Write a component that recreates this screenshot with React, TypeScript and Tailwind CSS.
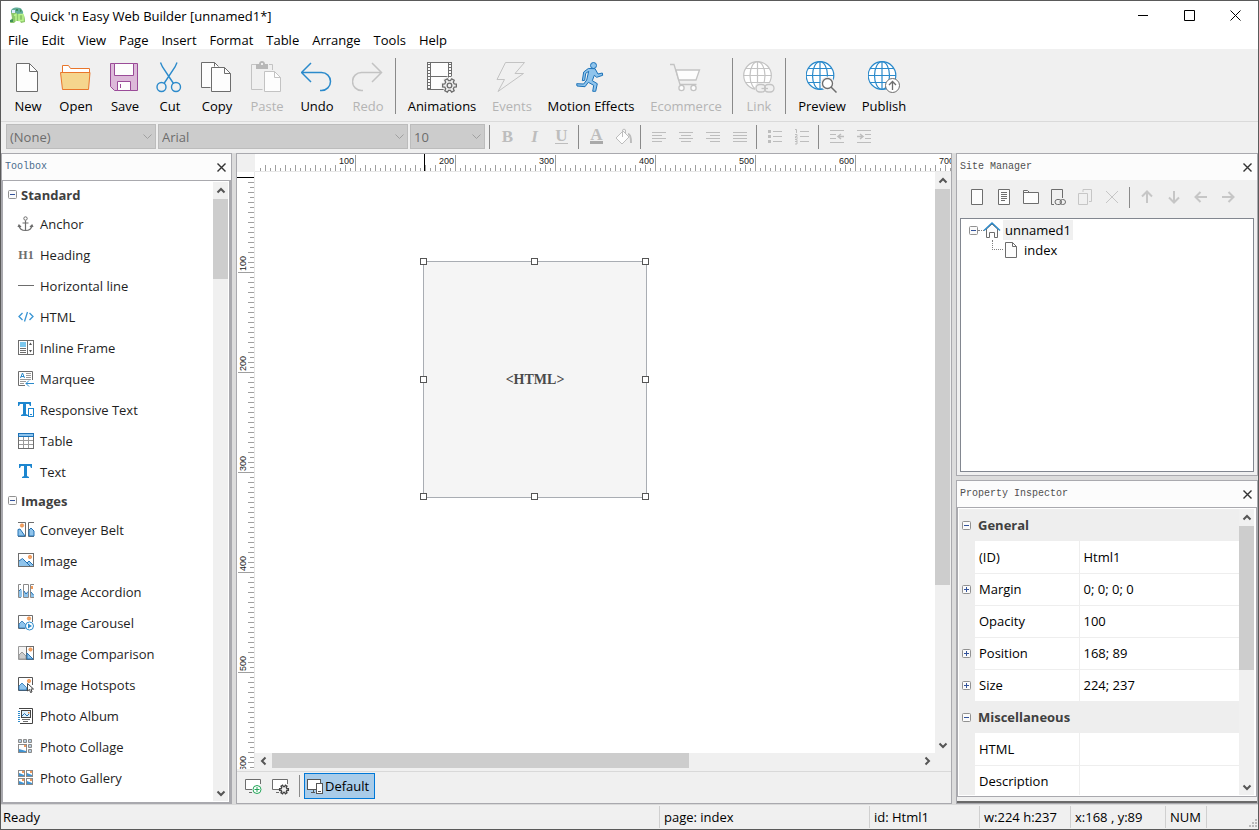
import { useLayoutEffect, useRef, useState } from "react";
import type { ReactNode } from "react";
import clsx from "clsx";

const GRAY = "#6d6d6d";
const DIM = "#c3c3c3";
const BLUE = "#2b8acb";

/* ---------- large toolbar icons (32x32) ---------- */

function Icon32({ color = GRAY, children }: { color?: string; children: ReactNode }) {
  return (
    <svg width="32" height="32" viewBox="0 0 32 32" fill="none" stroke={color} aria-hidden="true">
      {children}
    </svg>
  );
}

function gearPoints(cx: number, cy: number, outer: number, inner: number, teeth = 6) {
  const points: string[] = [];
  for (let i = 0; i < teeth; i++) {
    const base = (i * 2 * Math.PI) / teeth;
    const step = Math.PI / teeth;
    const ring: [number, number][] = [
      [-0.4, outer],
      [0.4, outer],
      [0.65, inner],
      [1.35, inner],
    ];
    ring.forEach(([offset, radius]) => {
      const angle = base + offset * step;
      points.push(`${cx + radius * Math.cos(angle)},${cy + radius * Math.sin(angle)}`);
    });
  }
  return points.join(" ");
}

function GlobeLines({ cx }: { cx: number }) {
  return (
    <g fill="none" strokeWidth="1.2">
      <circle cx={cx} cy="14.5" r="13.8" fill="#fff" />
      <ellipse cx={cx} cy="14.5" rx="7.5" ry="13.8" />
      <path d={`M${cx} .5v28M${cx - 14} 14.5h28M${cx - 12} 7.5h24M${cx - 12} 21.5h24`} />
    </g>
  );
}

const bigIcons: Record<string, ReactNode> = {
  New: (
    <Icon32>
      <path fill="#fdfdfd" d="M4.5 2.5H17.5L25.5 10.5V30.5H4.5Z" />
      <path d="M17.5 2.5V10.5H25.5" />
    </Icon32>
  ),
  Open: (
    <Icon32 color="#e9762b">
      <path fill="#fff" d="M2.5 14V4.5H8.5L10.5 7.5H29.5V14Z" />
      <path fill="#f5d58d" d="M.5 11.5H30L28.5 28.5H2.5Z" />
    </Icon32>
  ),
  Save: (
    <Icon32 color="#9a4b98">
      <path fill="#dcb9d9" d="M1.5 2.5H28.5V29.5H5.5L1.5 25.5Z" />
      <path fill="#fdfdfd" d="M5.5 2.5H24.5V14.5H5.5ZM8.5 20.5H21.5V29.5H8.5Z" />
      <path d="M11.5 23V27" />
    </Icon32>
  ),
  Cut: (
    <Icon32 color={BLUE}>
      <path strokeWidth="1.4" d="M6.5 1.5L8.5 6L19.5 22.5M23 1.5L21 6L10 22.5" />
      <circle strokeWidth="1.4" cx="7.5" cy="26" r="4.5" />
      <circle strokeWidth="1.4" cx="22" cy="26" r="4.5" />
    </Icon32>
  ),
  Copy: (
    <Icon32>
      <path fill="#fdfdfd" d="M10.5 26.5H.5V1.5H13.5L17.5 5.5V26.5" stroke="none" />
      <path d="M9.5 26.5H.5V1.5H13.5L17.5 5.5M13.5 1.5V5.5" />
      <path fill="#fdfdfd" d="M10.5 6.5H23.5L29.5 12.5V30.5H10.5Z" />
      <path d="M23.5 6.5V12.5H29.5" />
    </Icon32>
  ),
  Paste: (
    <Icon32 color={DIM}>
      <path d="M5 3.5H.5V28.5H11.5M18 3.5H21.5V9" />
      <path fill="#b8b8b8" stroke="none" d="M5 3H8C8 1 9.5 0 11 0S14 1 14 3H17V8H5Z" />
      <circle cx="11" cy="3" r="1" fill="#fff" stroke="none" />
      <path fill="#fdfdfd" d="M13.5 10.5H23.5L29.5 16.5V30.5H13.5Z" />
      <path d="M23.5 10.5V16.5H29.5" />
    </Icon32>
  ),
  Undo: (
    <Icon32 color={BLUE}>
      <path strokeWidth="1.5" d="M10 2L.5 11.5L10 21M.5 11.5H20.5A9 9 0 0 1 20.5 29.5H19" />
    </Icon32>
  ),
  Redo: (
    <Icon32 color={DIM}>
      <path strokeWidth="1.5" d="M20 2L29.5 11.5L20 21M29.5 11.5H9.5A9 9 0 0 0 9.5 29.5H11" />
    </Icon32>
  ),
  Animations: (
    <Icon32>
      <rect x="1.5" y="1.5" width="24" height="27" fill="#fdfdfd" />
      <path d="M4.5 1.5V28.5M22.5 1.5V28.5M4.5 15.5H22.5" />
      <path strokeDasharray="1 2" strokeWidth="2" d="M3 3V28M24 3V28" />
      <polygon points={gearPoints(23.5, 24.5, 7.5, 5)} fill="#f0f0f0" stroke="#f0f0f0" strokeWidth="3" />
      <polygon points={gearPoints(23.5, 24.5, 7, 5)} fill="#f0f0f0" strokeWidth="1.3" />
      <circle cx="23.5" cy="24.5" r="2.3" strokeWidth="1.3" />
    </Icon32>
  ),
  Events: (
    <Icon32 color={DIM}>
      <path d="M9.5 1.5H28.5L19 12.5H27.5L2 30.5L8.5 18.5H1Z" />
    </Icon32>
  ),
  "Motion Effects": (
    <Icon32 color="#1c72b8">
      <circle cx="18.5" cy="4.5" r="3" fill="#8fc4ec" />
      <path
        fill="#8fc4ec"
        strokeLinejoin="round"
        d="M7.3 19.7L8.7 11L13.3 7.5L20 7.7L23 13L27.3 12L27.7 14.3L21.7 16.3L19.3 14.3L17.3 19.7L22.3 22.7L20.7 30.3H17.7L18.7 24.3L13.3 21.3L10 25.7L2 25L1.7 22.7L8.7 23L11.7 19L13.7 10.3L10.7 12.3L9.7 19.3Z"
      />
    </Icon32>
  ),
  Ecommerce: (
    <Icon32 color={DIM}>
      <path strokeWidth="1.3" d="M0 3.5H4L10 23.5H26.5" />
      <path fill="#fdfdfd" strokeWidth="1.3" d="M6 9H29.5L26 19H8.7Z" />
      <circle cx="11.5" cy="27" r="2.6" strokeWidth="1.3" fill="#fdfdfd" />
      <circle cx="23.5" cy="27" r="2.6" strokeWidth="1.3" fill="#fdfdfd" />
    </Icon32>
  ),
  Link: (
    <Icon32 color={DIM}>
      <GlobeLines cx={14.5} />
      <rect x="12" y="22" width="21" height="11" rx="4" fill="#f0f0f0" stroke="none" />
      <rect x="13" y="23.5" width="9.5" height="7.5" rx="3.7" strokeWidth="1.3" />
      <rect x="21.5" y="23.5" width="9.5" height="7.5" rx="3.7" strokeWidth="1.3" />
      <path strokeWidth="1.3" d="M18.5 27.5H25" />
    </Icon32>
  ),
  Preview: (
    <Icon32 color={BLUE}>
      <GlobeLines cx={14} />
      <circle cx="21.5" cy="22.5" r="7" fill="#f0f0f0" stroke="none" />
      <circle cx="21.5" cy="22.5" r="5" fill="#fff" stroke={GRAY} strokeWidth="1.3" />
      <path stroke={GRAY} strokeWidth="1.5" d="M25 26L30.5 31.5" />
    </Icon32>
  ),
  Publish: (
    <Icon32 color={BLUE}>
      <GlobeLines cx={14} />
      <circle cx="24.5" cy="24.5" r="7" fill="#fff" stroke={GRAY} />
      <path stroke={GRAY} strokeWidth="1.3" d="M24.5 29V20.5M21 24L24.5 20.5L28 24" />
    </Icon32>
  ),
};

type Tool = { label: string; width: string; disabled?: boolean };

const tools: (Tool | null)[] = [
  { label: "New", width: "w-12" },
  { label: "Open", width: "w-12" },
  { label: "Save", width: "w-[50px]" },
  { label: "Cut", width: "w-10" },
  { label: "Copy", width: "w-[54px]" },
  { label: "Paste", width: "w-[46px]", disabled: true },
  { label: "Undo", width: "w-[54px]" },
  { label: "Redo", width: "w-12", disabled: true },
  null,
  { label: "Animations", width: "w-[86px]" },
  { label: "Events", width: "w-[54px]", disabled: true },
  { label: "Motion Effects", width: "w-[104px]" },
  { label: "Ecommerce", width: "w-[86px]", disabled: true },
  null,
  { label: "Link", width: "w-[46px]", disabled: true },
  null,
  { label: "Preview", width: "w-[66px]" },
  { label: "Publish", width: "w-[58px]" },
];

/* ---------- small icons (16x16) ---------- */

function Icon16({ color = GRAY, children }: { color?: string; children: ReactNode }) {
  return (
    <svg
      width="16"
      height="16"
      viewBox="0 0 16 16"
      fill="none"
      stroke={color}
      className="shrink-0 overflow-visible"
      aria-hidden="true"
    >
      {children}
    </svg>
  );
}

function Sun({ cx, cy }: { cx: number; cy: number }) {
  return <circle cx={cx} cy={cy} r="1.7" fill="#f3a462" stroke="#e5803a" strokeWidth=".6" />;
}

function MiniScene({ x, y, size = 6 }: { x: number; y: number; size?: number }) {
  const right = x + size - 1;
  const bottom = y + size - 1;
  return (
    <g>
      <rect x={x + 0.5} y={y + 0.5} width={size - 1} height={size - 1} fill="#fff" />
      <path stroke="none" fill="#3f93d2" d={`M${x + 1} ${bottom - 3}L${right} ${bottom - 1}V${bottom}H${x + 1}Z`} />
      <rect x={right - 2} y={y + 1} width="2" height="2" fill="#ef9a5c" stroke="none" />
    </g>
  );
}

type ToolboxItem = { label: string; icon: ReactNode };

const standardItems: ToolboxItem[] = [
  {
    label: "Anchor",
    icon: (
      <Icon16>
        <circle cx="7.5" cy="2.5" r="1.7" />
        <path
          strokeWidth="1.2"
          d="M7.5 4.5V14.5M4.5 7H10.5M1 9.5C1.5 13 4 14.5 7.5 14.5S13.5 13 14 9.5M0 11L1 9L3 11M12 11L14 9L15 11"
        />
      </Icon16>
    ),
  },
  {
    label: "Heading",
    icon: (
      <span className="flex w-4 shrink-0 justify-center font-['Liberation_Serif',serif] text-xs leading-4 font-bold text-[#6d6d6d]">
        H1
      </span>
    ),
  },
  { label: "Horizontal line", icon: <Icon16><path d="M0 7.5H16" /></Icon16> },
  {
    label: "HTML",
    icon: (
      <Icon16 color="#3a95d4">
        <path strokeWidth="1.3" d="M4.5 4L1 7.5L4.5 11M11.5 4L15 7.5L11.5 11M9.5 3L6.5 12.5" />
      </Icon16>
    ),
  },
  {
    label: "Inline Frame",
    icon: (
      <Icon16>
        <rect x=".5" y=".5" width="15" height="14" fill="#fff" />
        <rect x="2" y="2" width="6" height="5" fill="#7cc8ee" stroke="none" />
        <path d="M9.5 1V14M2 8.5H8M2 10.5H8M2 12.5H8" />
        <path fill="#555" stroke="none" d="M11 5L12.5 2.5L14 5ZM11 10H14L12.5 12.5Z" />
      </Icon16>
    ),
  },
  {
    label: "Marquee",
    icon: (
      <Icon16>
        <path fill="#fff" d="M14.5 9V.5H.5V14.5H7" />
        <path stroke="#9a9a9a" d="M8 2.5H13M8 4.5H13M8 6.5H13M2 8.5H13M2 10.5H8M2 12.5H6" />
        <path stroke="#2b8acb" d="M2.5 7L4.5 2L6.5 7M3 5.5H6M8 12.5H16M11 9.5L8 12.5L11 15.5" />
      </Icon16>
    ),
  },
  {
    label: "Responsive Text",
    icon: (
      <Icon16 color="#1d86cf">
        <path fill="#1d86cf" stroke="none" d="M0 0H13V4H12L11 2H8V12L10 13V14H3V13L5 12V2H2L1 4H0Z" />
        <rect x="10" y="6" width="6" height="9" fill="#fff" stroke="none" />
        <rect x="10.5" y="6.5" width="5" height="8" fill="#fff" />
        <path d="M12 12.5H14" />
      </Icon16>
    ),
  },
  {
    label: "Table",
    icon: (
      <Icon16>
        <path stroke="#9a9a9a" d="M5.5 3V15M10.5 3V15M1 7.5H15M1 11.5H15" />
        <rect x=".5" y=".5" width="15" height="15" />
        <rect x=".5" y=".5" width="15" height="3" fill="#8fc4ec" stroke="#1c72b8" />
      </Icon16>
    ),
  },
  {
    label: "Text",
    icon: (
      <Icon16>
        <path fill="#1d86cf" stroke="none" d="M1 0H14V4H13L12 2H9V12L11 13V14H4V13L6 12V2H3L2 4H1Z" />
      </Icon16>
    ),
  },
];

const imageItems: ToolboxItem[] = [
  {
    label: "Conveyer Belt",
    icon: (
      <Icon16>
        <path fill="#fff" d="M0 .5H7.5V14.5H0M16 .5H10.5V14.5H16" />
        <path fill="#8fc4ec" stroke="#2472b4" d="M0 7.5L2 7L7 14H0ZM11 14V8L13 6L16 9V14Z" />
        <Sun cx={4} cy={3.5} />
      </Icon16>
    ),
  },
  {
    label: "Image",
    icon: (
      <Icon16>
        <rect x=".5" y=".5" width="15" height="13" fill="#fff" />
        <path fill="#8fc4ec" stroke="none" d="M1 8L4.5 5.5L9 10L11 8L15 12V13H1Z" />
        <path stroke="#2472b4" d="M1 8L4.5 5.5L12 13M9 10L11 8L15 12" />
        <Sun cx={12} cy={4} />
      </Icon16>
    ),
  },
  {
    label: "Image Accordion",
    icon: (
      <Icon16 color="#8a8a8a">
        <path fill="#fff" d="M3 .5H.5V13.5H3M5.5 .5H10.5V13.5H5.5ZM16 .5H12.5V13.5H16" />
        <path fill="#8fc4ec" stroke="none" d="M1 13V7L3 5L4 7V13ZM6 7L8 10L10 8V13H6ZM13 8L16 11V13H13Z" />
        <path stroke="#2472b4" d="M1 7L3 5M6 7L8 10L10 7.5M13 8L15.5 11" />
        <rect x="13" y="2" width="2" height="3" fill="#ef9a5c" stroke="none" />
      </Icon16>
    ),
  },
  {
    label: "Image Carousel",
    icon: (
      <Icon16>
        <path fill="#fff" d="M14.5 7V.5H.5V13.5H7" />
        <path fill="#8fc4ec" stroke="#2472b4" strokeWidth=".8" d="M1 9L4 6L8 10V13H1Z" />
        <Sun cx={11} cy={3.5} />
        <circle cx="11.5" cy="11" r="4" fill="#fff" stroke="#2b8acb" />
        <path fill="#2b8acb" stroke="none" d="M10 8.5L14 11L10 13.5Z" />
      </Icon16>
    ),
  },
  {
    label: "Image Comparison",
    icon: (
      <Icon16>
        <path fill="#f4f4f4" stroke="#9a9a9a" d="M8 .5H.5V13.5H8" />
        <path fill="#ccc" stroke="#999" d="M1 9L4 6L8 10V13H1Z" />
        <rect x="8.5" y=".5" width="7" height="13" fill="#fff" />
        <path fill="#8fc4ec" stroke="#2472b4" d="M9 13V7L15 13Z" />
        <Sun cx={12.5} cy={3.5} />
      </Icon16>
    ),
  },
  {
    label: "Image Hotspots",
    icon: (
      <Icon16>
        <path fill="#fff" stroke="#555" d="M14.5 8V.5H.5V13.5H9" />
        <path fill="#8fc4ec" stroke="#2472b4" strokeWidth=".8" d="M1 9L4 6L8.5 10.5V13H1Z" />
        <Sun cx={11} cy={4} />
        <path fill="#fff" stroke="#444" d="M9.5 6.5V14L11.5 12.5L12.5 15.5L14 15L13 12H15.5Z" />
      </Icon16>
    ),
  },
  {
    label: "Photo Album",
    icon: (
      <Icon16 color="#444">
        <path d="M1 .5H14.5V15.5H2" />
        <path stroke="#2b8acb" strokeDasharray="1 1" strokeWidth="2" d="M1 3V14" />
        <rect x="3.5" y="2.5" width="9" height="7" fill="#dff0fb" />
        <path stroke="#2472b4" d="M4 8L6.5 5.5L9 8L11 6" />
        <rect x="10" y="4" width="1.5" height="1.5" fill="#e5803a" stroke="none" />
        <path stroke={GRAY} d="M4 11.5H12M5 13.5H10" />
      </Icon16>
    ),
  },
  {
    label: "Photo Collage",
    icon: (
      <Icon16 color="#8a8a8a">
        <path
          fill="#b9cfe0"
          d="M.5 .5H3.5V3.500H.5ZM5.5 .5H8.5V3.500H5.5ZM10.5 .5H13.5V3.500H10.5ZM10.5 5.5H13.5V8.5H10.5ZM10.5 10.5H13.5V13.5H10.5Z"
        />
        <MiniScene x={0} y={5} size={9} />
      </Icon16>
    ),
  },
  {
    label: "Photo Gallery",
    icon: (
      <Icon16 color="#8a8a8a">
        <MiniScene x={0} y={0} size={7} />
        <MiniScene x={8} y={0} size={7} />
        <MiniScene x={0} y={8} size={7} />
        <MiniScene x={8} y={8} size={7} />
      </Icon16>
    ),
  },
];

function AppLogo() {
  return (
    <svg width="17" height="17" viewBox="0 0 17 17" className="shrink-0" aria-hidden="true">
      <path fill="#63ad9a" d="M3 2C6 0 12 0 13 3C15 5 14 7 13 8H5C2 7 1 4 3 2Z" />
      <path fill="#8cc56b" d="M2 6C4 4 7 5 8 7L14 7C16 9 16 13 16 15L12 16L11 14L7 14L5 16H1L3 11Z" />
      <path fill="#3f8f59" d="M7 2H9V4H7ZM11 2L13 4L11 5ZM1 13L4 12V15H1Z" />
      <path fill="none" stroke="#b9f58c" strokeWidth="1.5" d="M5 8.500L7 7.500V14M10 7.500H14V13.500H10Z" />
      <path fill="#dfe9ff" d="M3 3H6V6H3Z" />
    </svg>
  );
}

function Chevron({ dir }: { dir: "up" | "down" | "left" | "right" }) {
  const paths = {
    up: "M1.5 6.5L5 3L8.5 6.5",
    down: "M1.5 3.5L5 7L8.5 3.5",
    left: "M6.5 1.5L3 5L6.5 8.5",
    right: "M3.5 1.5L7 5L3.5 8.5",
  };
  return (
    <svg width="10" height="10" viewBox="0 0 10 10" fill="none" stroke="#555" strokeWidth="2" aria-hidden="true">
      <path d={paths[dir]} />
    </svg>
  );
}

function VScroll({ thumb }: { thumb: string }) {
  return (
    <div className="flex w-[15px] shrink-0 flex-col bg-[#f0f0f0]">
      <button aria-label="Scroll up" className="flex h-[17px] shrink-0 items-center justify-center">
        <Chevron dir="up" />
      </button>
      <div className="min-h-0 flex-1">
        <div className={clsx("bg-[#cdcdcd]", thumb)} />
      </div>
      <button aria-label="Scroll down" className="flex h-[17px] shrink-0 items-center justify-center">
        <Chevron dir="down" />
      </button>
    </div>
  );
}

function PanelHeader({ title, active }: { title: string; active?: boolean }) {
  return (
    <div className="flex h-[26px] shrink-0 items-center justify-between bg-[#fcfcfc] pr-1 pl-[3px]">
      <h2
        className={clsx(
          "font-['Liberation_Mono',monospace] text-[10px]",
          active ? "text-[#4a6c8c]" : "text-[#505050]"
        )}
      >
        {title}
      </h2>
      <button aria-label={`Close ${title}`} className="p-px">
        <svg width="9" height="9" viewBox="0 0 9 9" stroke="#333" strokeWidth="1.4" aria-hidden="true">
          <path d="M.5 .5L8.5 8.5M8.5 .5L.5 8.5" />
        </svg>
      </button>
    </div>
  );
}

function Expander({ open }: { open: boolean }) {
  return (
    <svg width="9" height="9" viewBox="0 0 9 9" className="shrink-0" aria-hidden="true">
      <rect x=".5" y=".5" width="8" height="8" rx="1" fill="#fafafa" stroke="#919191" />
      <path d={open ? "M2 4.5H7" : "M2 4.5H7M4.5 2V7"} stroke="#33539b" />
    </svg>
  );
}

/* ---------- format bar ---------- */

function FormatSelect({ label, value, width }: { label: string; value: string; width: string }) {
  return (
    <div className={clsx("relative", width)}>
      <select
        aria-label={label}
        disabled
        className="h-[25px] w-full appearance-none border border-[#bcbcbc] bg-[#ccc] px-[3px] text-[#6d6d6d]"
      >
        <option>{value}</option>
      </select>
      <svg
        width="9"
        height="6"
        viewBox="0 0 9 6"
        fill="none"
        stroke="#a0a0a0"
        className="pointer-events-none absolute top-[10px] right-1"
        aria-hidden="true"
      >
        <path d="M.5 .5L4.5 4.5L8.5 .5" />
      </svg>
    </div>
  );
}

function Lines({ rows }: { rows: [number, number][] }) {
  return (
    <Icon16 color="#bdbdbd">
      {rows.map(([x1, x2], i) => (
        <path key={i} d={`M${x1} ${3.5 + i * 3}H${x2}`} />
      ))}
    </Icon16>
  );
}

const letter = "font-['Liberation_Serif',serif] text-[17px] text-[#bdbdbd]";

const formatGroups: { label: string; icon: ReactNode }[][] = [
  [
    { label: "Bold", icon: <span className={clsx(letter, "leading-4 font-bold")}>B</span> },
    { label: "Italic", icon: <span className={clsx(letter, "leading-4 font-bold italic")}>I</span> },
    {
      label: "Underline",
      icon: <span className={clsx(letter, "border-b border-[#bdbdbd] leading-[14px] font-bold")}>U</span>,
    },
  ],
  [
    {
      label: "Text color",
      icon: <span className={clsx(letter, "border-b-3 border-[#a9a9a9] leading-3 font-bold")}>A</span>,
    },
    {
      label: "Fill color",
      icon: (
        <Icon16 color="#bdbdbd">
          <path fill="#fdfdfd" d="M0 9L7 2L13 8L6 15Z" />
          <path d="M6.5 8V1C6.5 0 9.5 0 9.5 1V5" />
          <path strokeWidth="2" d="M12 5C14 5 15 7 15 14" />
        </Icon16>
      ),
    },
  ],
  [
    { label: "Align left", icon: <Lines rows={[[1, 15], [1, 11], [1, 15], [1, 11]]} /> },
    { label: "Center", icon: <Lines rows={[[1, 15], [3, 13], [1, 15], [3, 13]]} /> },
    { label: "Align right", icon: <Lines rows={[[1, 15], [5, 15], [1, 15], [5, 15]]} /> },
    { label: "Justify", icon: <Lines rows={[[1, 15], [1, 15], [1, 15], [1, 15]]} /> },
  ],
  [
    {
      label: "Bullets",
      icon: (
        <Icon16 color="#bdbdbd">
          <path d="M6 2.5H15M6 7.5H15M6 12.5H15" />
          <path fill="#bdbdbd" stroke="none" d="M1 1H4V4H1ZM1 6H4V9H1ZM1 11H4V14H1Z" />
        </Icon16>
      ),
    },
    {
      label: "Numbering",
      icon: (
        <Icon16 color="#bdbdbd">
          <path d="M6 2.5H15M6 7.5H15M6 12.5H15" />
          <path d="M1 .5H2.5V4M1 5.5H3V7.5H1.5V9H4M1 10.5H3V15H1M1 12.5H3" />
        </Icon16>
      ),
    },
  ],
  [
    {
      label: "Outdent",
      icon: (
        <Icon16 color="#bdbdbd">
          <path d="M1 1.5H15M1 5.5H7M1 9.5H7M1 13.5H15" />
          <path strokeWidth="1.5" d="M9 7.5H15M12 5L9 7.5L12 10" />
        </Icon16>
      ),
    },
    {
      label: "Indent",
      icon: (
        <Icon16 color="#bdbdbd">
          <path d="M1 1.5H15M9 5.5H15M9 9.5H15M1 13.5H15" />
          <path strokeWidth="1.5" d="M1 7.5H7M4 5L7 7.5L4 10" />
        </Icon16>
      ),
    },
  ],
];

/* ---------- rulers ---------- */

function useExtent(axis: "width" | "height") {
  const ref = useRef<SVGSVGElement>(null);
  const [extent, setExtent] = useState(0);

  useLayoutEffect(() => {
    const el = ref.current;
    if (!el) return;
    const update = () => setExtent(el.getBoundingClientRect()[axis]);
    update();
    const observer = new ResizeObserver(update);
    observer.observe(el);
    return () => observer.disconnect();
  }, [axis]);

  return { ref, extent };
}

// one mark every 5px, numbers every 100px
const range = (step: number, end: number) =>
  Array.from({ length: Math.max(0, Math.floor(end / step)) }, (_, i) => (i + 1) * step);

function TopRuler() {
  const { ref, extent } = useExtent("width");
  return (
    <svg ref={ref} className="h-[18px] min-w-0 flex-1 border-b border-[#e8e8e8] bg-white" aria-hidden="true">
      {range(5, extent).map((v) => (
        <path key={v} d={`M${v + 0.5} ${v % 100 === 0 ? 1 : v % 10 === 0 ? 11 : 14}V17`} stroke="#9f9f9f" />
      ))}
      {range(100, extent + 10).map((v) => (
        <text key={v} x={v - 1} y="10" textAnchor="end" fontSize="9" fontFamily="Liberation Sans" fill="#222">
          {v}
        </text>
      ))}
      <path d="M169.5 0V18" stroke="#000" />
    </svg>
  );
}

function SideRuler() {
  const { ref, extent } = useExtent("height");
  return (
    <svg ref={ref} className="h-full w-[18px] shrink-0 border-r border-[#e8e8e8] bg-white" aria-hidden="true">
      {range(5, extent)
        .slice(1)
        .map((v) => (
          <path key={v} d={`M${v % 100 === 0 ? 1 : v % 10 === 0 ? 11 : 13} ${v + 0.5}H17`} stroke="#9f9f9f" />
        ))}
      {range(100, extent + 10).map((v) => (
        <text
          key={v}
          x="9"
          y={v - 1}
          transform={`rotate(-90 9 ${v - 1})`}
          fontSize="9"
          fontFamily="Liberation Sans"
          fill="#222"
        >
          {v}
        </text>
      ))}
      <path d="M0 5.5H17" stroke="#000" />
    </svg>
  );
}

const handles = [
  "left-0 top-0",
  "left-1/2 top-0",
  "left-full top-0",
  "left-0 top-1/2",
  "left-full top-1/2",
  "left-0 top-full",
  "left-1/2 top-full",
  "left-full top-full",
];

function Workspace() {
  return (
    <main className="flex min-w-0 flex-1 flex-col border border-[#a9a9ae] bg-[#f0f0f0]">
      <div className="flex shrink-0">
        <div className="size-[18px] shrink-0 bg-[#f0f0f0]" />
        <TopRuler />
      </div>
      <div className="flex min-h-0 flex-1">
        <SideRuler />
        <div className="flex min-w-0 flex-1 flex-col pr-px pb-px">
          <div className="flex min-h-0 flex-1">
            <div className="relative min-w-0 flex-1 overflow-hidden bg-white">
              {/* selected object, placed by its x / y properties */}
              <div className="absolute top-[89px] left-[168px] flex h-[237px] w-[224px] items-center justify-center border border-[#a9adb3] bg-[#f5f5f5] font-['Liberation_Serif',serif] text-sm font-bold text-[#4a4a4a]">
                &lt;HTML&gt;
                {handles.map((pos) => (
                  <span
                    key={pos}
                    className={clsx("absolute -mt-1 -ml-1 size-[7px] border border-[#555] bg-white", pos)}
                  />
                ))}
              </div>
            </div>
            <VScroll thumb="h-[396px]" />
          </div>
          <div className="mr-[15px] flex h-[15px] shrink-0 bg-[#f0f0f0]">
            <button aria-label="Scroll left" className="flex w-[17px] items-center justify-center">
              <Chevron dir="left" />
            </button>
            <div className="flex-1">
              <div className="h-full w-[417px] bg-[#cdcdcd]" />
            </div>
            <button aria-label="Scroll right" className="flex w-[17px] items-center justify-center">
              <Chevron dir="right" />
            </button>
          </div>
        </div>
      </div>
      <div className="mt-0.5 flex h-8 shrink-0 items-center border-t border-[#d9d9d9] pb-1 pl-2">
        <button aria-label="Add breakpoint" className="w-[27px]">
          <Icon16>
            <path fill="#fff" stroke="none" d="M0 1H15V12H0Z" />
            <path d="M15.5 6V1.5H.5V11.5H7M4 14.5H7" />
            <circle cx="12" cy="11.5" r="4" fill="#fff" stroke="#22a558" />
            <path stroke="#22a558" d="M9.5 11.5H14.5M12 9V14" />
          </Icon16>
        </button>
        <button aria-label="Breakpoint settings" className="w-[27px]">
          <Icon16>
            <path fill="#fff" stroke="none" d="M0 1H15V12H0Z" />
            <path d="M15.5 6V1.5H.5V11.5H7M4 14.5H7" />
            <polygon points={gearPoints(12, 11.5, 4.5, 3)} fill="#f0f0f0" stroke="#444" strokeWidth="1.3" />
          </Icon16>
        </button>
        <div className="mr-1 h-[22px] w-px bg-[#8a8a8a]" />
        <button className="flex h-[26px] items-center gap-0.5 border border-[#0078d7] bg-[#a9cce9] pr-[5px] pl-0.5">
          <Icon16 color="#555">
            <rect x=".5" y="1.5" width="13" height="10" fill="#fff" />
            <path d="M6.5 12V14M4 14.5H8" />
            <rect x="9.5" y="5.5" width="6" height="10" fill="#fff" />
            <path d="M11 13.5H14" />
          </Icon16>
          Default
        </button>
      </div>
    </main>
  );
}

/* ---------- side panels ---------- */

function ToolboxGroup({ title, items }: { title: string; items: ToolboxItem[] }) {
  const [open, setOpen] = useState(true);
  return (
    <section>
      <button
        onClick={() => setOpen(!open)}
        className="flex h-[27px] w-full items-center gap-1 pl-[5px] font-bold text-[#404040]"
      >
        <Expander open={open} />
        {title}
      </button>
      {open && (
        <ul>
          {items.map((item) => (
            <li key={item.label}>
              <button className="flex h-[31px] w-full items-center gap-1.5 pl-[15px] text-[#1e1e1e]">
                {item.icon}
                {item.label}
              </button>
            </li>
          ))}
        </ul>
      )}
    </section>
  );
}

function Toolbox() {
  return (
    <aside className="flex w-[231px] shrink-0 flex-col border border-[#a9a9ae]">
      <PanelHeader title="Toolbox" active />
      <div className="flex min-h-0 flex-1 border-t border-r-2 border-b border-l border-[#a9a9ae] bg-white pr-px">
        <div className="min-w-0 flex-1 overflow-hidden">
          <ToolboxGroup title="Standard" items={standardItems} />
          <ToolboxGroup title="Images" items={imageItems} />
        </div>
        <div className="flex py-px">
          <VScroll thumb="h-20" />
        </div>
      </div>
    </aside>
  );
}

const siteActions: ({ label: string; dim?: boolean; path: string; width?: string } | null)[] = [
  { label: "New page", path: "M2.5 .5H13.5V15.5H2.5Z" },
  {
    label: "Page properties",
    path: "M2.5 .5H13.5V15.5H2.5ZM5 3.5H11M5 5.5H11M5 7.5H11M5 9.5H11M5 11.5H9",
  },
  { label: "New folder", path: "M.5 14.5V1.5H4.5L6.5 3.5H15.5V14.5ZM0 3.5H7" },
  {
    label: "Link page",
    path: "M4 15.5H1.5V.5H12.5V9M7 10.5H9A2.5 2.5 0 0 1 9 15.5H7.5A2.5 2.5 0 0 1 7.5 10.5M10 13A2.5 2.5 0 0 1 12.5 10.5H13A2.5 2.5 0 0 1 13 15.5H12.5A2.5 2.5 0 0 1 10 13",
  },
  { label: "Clone page", dim: true, path: "M1.5 4.5H10.5V15.5H1.5ZM6 3V.5H14.5V12.5H12" },
  { label: "Delete page", dim: true, path: "M2 2L14 14M14 2L2 14" },
  null,
  { label: "Move up", dim: true, width: "2", path: "M8 14V3M3 7.5L8 2.5L13 7.5" },
  { label: "Move down", dim: true, width: "2", path: "M8 2V13M3 8.5L8 13.5L13 8.5" },
  { label: "Move left", dim: true, width: "2", path: "M14 8H3M7.5 3L2.5 8L7.5 13" },
  { label: "Move right", dim: true, width: "2", path: "M2 8H13M8.5 3L13.5 8L8.5 13" },
];

function SiteManager() {
  return (
    <section className="flex h-[323px] shrink-0 flex-col border border-[#a9a9ae]">
      <PanelHeader title="Site Manager" />
      <div className="flex h-[38px] shrink-0 items-center pb-1 pl-1.5">
        {siteActions.map((action, i) =>
          action ? (
            <button
              key={action.label}
              aria-label={action.label}
              disabled={action.dim}
              className="flex w-[27px] justify-center"
            >
              <svg
                width="16"
                height="16"
                viewBox="0 0 16 16"
                fill={action.dim || action.label === "Link page" ? "none" : "#fdfdfd"}
                stroke={action.dim ? "#c6c6c6" : GRAY}
                strokeWidth={action.width ?? "1"}
                aria-hidden="true"
              >
                <path d={action.path} />
              </svg>
            </button>
          ) : (
            <div key={i} className="mr-[3px] ml-1 h-[21px] w-px bg-[#8a8a8a]" />
          )
        )}
      </div>
      <ul className="mx-[3px] mb-[3px] flex-1 border border-[#828790] bg-white pt-px pl-2">
        <li>
          <div className="flex h-5 items-center">
            <Expander open />
            <span className="w-1.5 border-t border-dotted border-[#808080]" />
            <Icon16>
              <path fill="#fdfdfd" d="M2.5 7V15.5H5.5V10.5H10.5V15.5H13.5V7L8 2Z" />
              <path stroke="#2b8acb" strokeWidth="1.4" d="M0 8.5L8 1L16 8.5" />
            </Icon16>
            <span className="ml-[3px] bg-[#f0f0f0] px-0.5 leading-5">unnamed1</span>
          </div>
          <ul>
            <li className="flex h-5 items-center pl-[23px]">
              <span className="h-2.5 w-[11px] self-start border-b border-l border-dotted border-[#808080]" />
              <Icon16>
                <path fill="#fdfdfd" d="M2.5 .5H9.5L13.5 4.5V15.5H2.5ZM9.5 .5V4.5H13.5" />
              </Icon16>
              <span className="px-[5px]">index</span>
            </li>
          </ul>
        </li>
      </ul>
    </section>
  );
}

const propertyGroups = [
  {
    title: "General",
    rows: [
      { name: "(ID)", value: "Html1" },
      { name: "Margin", value: "0; 0; 0; 0", nested: true },
      { name: "Opacity", value: "100" },
      { name: "Position", value: "168; 89", nested: true },
      { name: "Size", value: "224; 237", nested: true },
    ],
  },
  {
    title: "Miscellaneous",
    rows: [
      { name: "HTML", value: "" },
      { name: "Description", value: "" },
    ],
  },
];

function PropertyInspector() {
  return (
    <section className="flex min-h-0 flex-1 flex-col border border-[#a9a9ae]">
      <PanelHeader title="Property Inspector" />
      <div className="mb-1 flex min-h-0 flex-1 border border-[#a9a9ae] bg-white p-px pr-0.5">
        <div className="min-w-0 flex-1 overflow-hidden bg-[#eee]">
          <table className="w-full table-fixed border-collapse text-left">
            <colgroup>
              <col className="w-4" />
              <col className="w-[104px]" />
              <col />
            </colgroup>
            {propertyGroups.map((group) => (
              <tbody key={group.title}>
                <tr className="h-8">
                  <td className="pl-[3px]">
                    <Expander open />
                  </td>
                  <th colSpan={2} className="pl-[3px] font-bold text-[#404040]">
                    {group.title}
                  </th>
                </tr>
                {group.rows.map((row) => (
                  <tr key={row.name} className="h-8">
                    <td className="pl-[3px]">{row.nested && <Expander open={false} />}</td>
                    <th className="border-r border-b border-[#eee] bg-white pl-1 font-normal">{row.name}</th>
                    <td className="border-b border-[#eee] bg-white pl-1">{row.value}</td>
                  </tr>
                ))}
              </tbody>
            ))}
          </table>
        </div>
        <VScroll thumb="h-36" />
      </div>
      <div className="h-0.5 shrink-0 bg-[#6a6a6a]" />
    </section>
  );
}

const menus = ["File", "Edit", "View", "Page", "Insert", "Format", "Table", "Arrange", "Tools", "Help"];

const windowButtons = [
  { label: "Minimize", path: "M0 5.5H10" },
  { label: "Maximize", path: "M.5 .5H10.5V10.5H.5Z" },
  { label: "Close", path: "M.5 .5L10.5 10.5M10.5 .5L.5 10.5" },
];

export default function App() {
  return (
    <div className="flex h-screen flex-col overflow-hidden border border-[#5a5a5a] bg-[#f0f0f0] font-['Open_Sans','Noto_Sans',sans-serif] text-[13px] leading-4 text-black">
      <header className="shrink-0 bg-white">
        <div className="flex h-[29px] items-center pl-2">
          <AppLogo />
          <h1 className="min-w-0 flex-1 truncate pl-1">Quick &apos;n Easy Web Builder [unnamed1*]</h1>
          {windowButtons.map((button) => (
            <button
              key={button.label}
              aria-label={button.label}
              className="flex h-full w-[46px] shrink-0 items-center justify-center"
            >
              <svg width="11" height="11" viewBox="0 0 11 11" fill="none" stroke="#000" aria-hidden="true">
                <path d={button.path} />
              </svg>
            </button>
          ))}
        </div>
        <nav className="flex h-[19px] items-center gap-[13px] pl-[7px]">
          {menus.map((menu) => (
            <button key={menu}>{menu}</button>
          ))}
        </nav>
      </header>

      <div className="flex h-[72px] shrink-0 pl-[3px]">
        {tools.map((tool, i) =>
          tool ? (
            <button
              key={tool.label}
              disabled={tool.disabled}
              className={clsx(
                "flex shrink-0 flex-col items-center gap-[5px] pt-3 whitespace-nowrap",
                tool.width,
                tool.disabled && "text-[#b4b4b4]"
              )}
            >
              {bigIcons[tool.label]}
              {tool.label}
            </button>
          ) : (
            <div key={i} className="mx-[3px] mt-[9px] h-[56px] w-px bg-[#8a8a8a]" />
          )
        )}
      </div>

      <div className="flex h-8 shrink-0 items-center border-t border-[#dadada] pb-0.5 pl-[5px]">
        <div className="flex gap-0.5 pr-px">
          <FormatSelect label="Style" value="(None)" width="w-[150px]" />
          <FormatSelect label="Font" value="Arial" width="w-[250px]" />
          <FormatSelect label="Font size" value="10" width="w-[75px]" />
        </div>
        {formatGroups.map((group, i) => (
          <div key={i} className="flex items-center">
            <div className="mr-1 ml-[3px] h-6 w-px bg-[#8a8a8a]" />
            {group.map((item) => (
              <button
                key={item.label}
                aria-label={item.label}
                disabled
                className="flex w-[27px] items-center justify-center"
              >
                {item.icon}
              </button>
            ))}
          </div>
        ))}
      </div>

      <div className="flex min-h-0 flex-1 gap-1 bg-[#dcdcdc]">
        <Toolbox />
        <Workspace />
        <div className="flex w-[302px] shrink-0 flex-col gap-1 bg-[#dcdcdc] *:bg-[#f0f0f0]">
          <SiteManager />
          <PropertyInspector />
        </div>
      </div>

      <footer className="flex h-[25px] shrink-0 items-center border-t border-[#d9d9d9] whitespace-nowrap *:border-[#d0d0d0]">
        <span className="flex-1 pl-0.5">Ready</span>
        <span className="w-[210px] border-l pl-1 leading-[22px]">page: index</span>
        <span className="w-[110px] border-l pl-1 leading-[22px]">id: Html1</span>
        <span className="w-[91px] border-l pl-1 leading-[22px]">w:224 h:237</span>
        <span className="w-[95px] border-l pl-1 leading-[22px]">x:168 , y:89</span>
        <span className="w-[41px] border-l pl-1 leading-[22px]">NUM</span>
        <span className="flex h-[22px] w-[52px] items-end justify-end border-l">
          <svg width="9" height="9" fill="#bbb" aria-hidden="true">
            <path d="M6 0H8V2H6ZM3 3H5V5H3ZM6 3H8V5H6ZM0 6H2V8H0ZM3 6H5V8H3ZM6 6H8V8H6Z" />
          </svg>
        </span>
      </footer>
    </div>
  );
}
